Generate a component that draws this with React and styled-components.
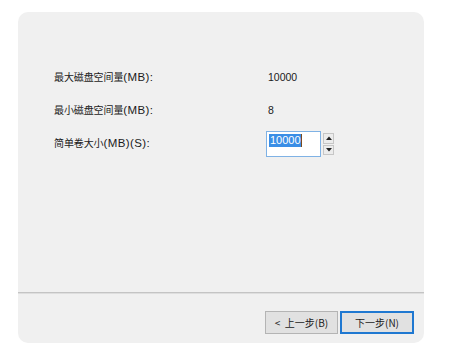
import React from "react";
import styled, { createGlobalStyle } from "styled-components";

const Global = createGlobalStyle`
  html, body { margin: 0; padding: 0; background: #ffffff; }
  body { font-family: "Liberation Sans", "Noto Sans CJK SC", sans-serif; color: #1b1b1b; }
`;

const Page = styled.div`
  padding: 12px 33px 0 18px;
  height: 343px;
  box-sizing: border-box;
  overflow: hidden;
`;

const Panel = styled.div`
  width: 406px;
  height: 331px;
  background: #f0f0f0;
  border-radius: 10px;
  display: flex;
  flex-direction: column;
`;

const Body = styled.div`
  height: 280px;
  box-sizing: border-box;
  padding: 52px 0 0 36px;
  display: grid;
  grid-template-columns: 212px auto;
  grid-auto-rows: 25px;
  row-gap: 8px;
  align-content: start;
`;

const Label = styled.div`
  display: flex;
  align-items: center;
  font-family: "Noto Sans CJK SC", sans-serif;
  font-size: 10px;
  letter-spacing: -0.1px;
`;

const Latin = styled.span`
  font-family: "Liberation Sans", sans-serif;
  font-size: 11.5px;
  letter-spacing: 0.4px;
`;

const Value = styled.div`
  display: flex;
  align-items: center;
  padding-left: 2px;
  font-size: 10.5px;
`;

const Spin = styled.div`
  display: flex;
  align-items: stretch;
  gap: 2px;
  height: 26px;
  margin-top: 1px;
`;

const Input = styled.div`
  width: 55px;
  box-sizing: border-box;
  background: #ffffff;
  border: 1px solid #7fb2e5;
  padding: 2px 0 0 2px;
  font-size: 11px;
  display: flex;
  align-items: flex-start;
`;

const Selected = styled.span`
  background: #3a8ee6;
  color: #ffffff;
  line-height: 13px;
  padding: 0 0 0 1px;
`;

const Caret = styled.span`
  width: 1px;
  height: 13px;
  background: #7a4a20;
`;

const SpinButtons = styled.div`
  display: flex;
  flex-direction: column;
  justify-content: center;
  gap: 1px;
  padding: 2px 0;
`;

const SpinButton = styled.div`
  width: 11px;
  height: 11px;
  box-sizing: border-box;
  background: #ececec;
  border: 1px solid #c6c6c6;
  display: flex;
  align-items: center;
  justify-content: center;
`;

const Separator = styled.div`
  height: 0;
  border-top: 1px solid #c4c4c4;
  border-bottom: 1px solid #dedede;
`;

const Footer = styled.div`
  display: flex;
  justify-content: flex-end;
  gap: 2px;
  padding: 17px 10px 0 0;
`;

const Button = styled.button`
  width: ${(p) => p.$w}px;
  height: 23px;
  box-sizing: border-box;
  margin: 0;
  padding: 0;
  background: #e1e1e1;
  border: ${(p) => (p.$primary ? "2px solid #1f78d1" : "1px solid #b4b4b4")};
  font-family: "Noto Sans CJK SC", sans-serif;
  font-size: 10px;
  color: #1b1b1b;
  display: flex;
  align-items: center;
  justify-content: center;
  white-space: pre;
`;

const Tri = ({ up }) => (
  <svg width="6" height="4" viewBox="0 0 6 4">
    <path d={up ? "M0 4 L3 0.5 L6 4 Z" : "M0 0 L3 3.5 L6 0 Z"} fill="#222" />
  </svg>
);

export default function App() {
  return (
    <>
      <Global />
      <Page>
        <Panel>
          <Body>
            <Label>
              最大磁盘空间量<Latin>(MB):</Latin>
            </Label>
            <Value>10000</Value>
            <Label>
              最小磁盘空间量<Latin>(MB):</Latin>
            </Label>
            <Value>8</Value>
            <Label>
              简单卷大小<Latin>(MB)(S):</Latin>
            </Label>
            <Spin>
              <Input>
                <Selected>10000</Selected>
                <Caret />
              </Input>
              <SpinButtons>
                <SpinButton>
                  <Tri up />
                </SpinButton>
                <SpinButton>
                  <Tri />
                </SpinButton>
              </SpinButtons>
            </Spin>
          </Body>
          <Separator />
          <Footer>
            <Button $w={73}>{"<  上一步(B)"}</Button>
            <Button $w={74} $primary>
              下一步(N)
            </Button>
          </Footer>
        </Panel>
      </Page>
    </>
  );
}
